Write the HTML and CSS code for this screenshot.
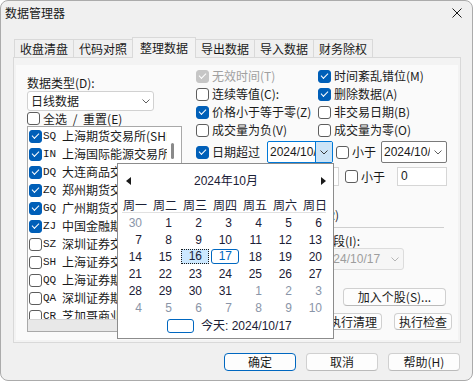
FILE: index.html
```html
<!DOCTYPE html>
<html lang="zh-CN">
<head>
    <meta charset="UTF-8">
    <title>数据管理器</title>
    <link rel="stylesheet" href="styles.css">
</head>
<body>
<div class="window">
    <div class="titlebar">
        <span class="title">数据管理器</span>
        <svg class="close" width="10" height="10" viewBox="0 0 10 10"><path d="M0.5 0.5L9.5 9.5M9.5 0.5L0.5 9.5" stroke="#1a1a1a" stroke-width="1" fill="none"/></svg>
    </div>

    <div class="tabs">
        <div class="tab">收盘清盘</div>
        <div class="tab">代码对照</div>
        <div class="tab active">整理数据</div>
        <div class="tab">导出数据</div>
        <div class="tab">导入数据</div>
        <div class="tab">财务除权</div>
    </div>

    <div class="panel">
        <div class="page">
            <div class="left">
                <div class="label">数据类型(D):</div>
                <div class="combo">
                    <span>日线数据</span>
                    <svg width="8" height="5" viewBox="0 0 8 5"><path d="M0.5 0.5L4 4L7.5 0.5" stroke="#5f5f5f" fill="none"/></svg>
                </div>
                <div class="check check-all"><span class="cb"></span>全选 / 重置(E)</div>
                <div class="list">
                    <div class="list-body">
                        <div class="items">
                            <div class="item"><span class="cb on"></span><span class="code">SQ</span>上海期货交易所(SHFE)</div>
                            <div class="item"><span class="cb on"></span><span class="code">IN</span>上海国际能源交易所(INE)</div>
                            <div class="item"><span class="cb on"></span><span class="code">DQ</span>大连商品交易所(DCE)</div>
                            <div class="item"><span class="cb on"></span><span class="code">ZQ</span>郑州期货交易所(ZCE)</div>
                            <div class="item"><span class="cb on"></span><span class="code">GQ</span>广州期货交易所(GFEX)</div>
                            <div class="item"><span class="cb on"></span><span class="code">ZJ</span>中国金融期货交易所</div>
                            <div class="item"><span class="cb"></span><span class="code">SZ</span>深圳证券交易所</div>
                            <div class="item"><span class="cb"></span><span class="code">SH</span>上海证券交易所</div>
                            <div class="item"><span class="cb"></span><span class="code">QQ</span>上海证券期权</div>
                            <div class="item"><span class="cb"></span><span class="code">QA</span>深圳证券期权</div>
                            <div class="item"><span class="cb"></span><span class="code">CR</span>芝加哥商业交易所</div>
                        </div>
                        <div class="vscroll"><div class="thumb"></div></div>
                    </div>
                    <div class="hscroll"></div>
                </div>
            </div>

            <div class="right">
                <div class="opts">
                    <div class="check disabled"><span class="cb on"></span>无效时间(T)</div>
                    <div class="check"><span class="cb on"></span>时间紊乱错位(M)</div>
                    <div class="check"><span class="cb"></span>连续等值(C):</div>
                    <div class="check"><span class="cb on"></span>删除数据(A)</div>
                    <div class="check"><span class="cb on"></span>价格小于等于零(Z)</div>
                    <div class="check"><span class="cb"></span>非交易日期(B)</div>
                    <div class="check"><span class="cb"></span>成交量为负(V)</div>
                    <div class="check"><span class="cb"></span>成交量为零(O)</div>
                </div>

                <div class="row date-row">
                    <div class="check lead"><span class="cb on"></span>日期超过</div>
                    <div class="picker focused">
                        <span class="val">2024/10/17</span>
                        <span class="drop"><svg width="8" height="5" viewBox="0 0 8 5"><path d="M0.5 0.5L4 4L7.5 0.5" stroke="#3a3a3a" fill="none"/></svg></span>
                    </div>
                    <div class="check less"><span class="cb"></span>小于</div>
                    <div class="picker second">
                        <span class="val">2024/10/17</span>
                        <span class="drop"><svg width="8" height="5" viewBox="0 0 8 5"><path d="M0.5 0.5L4 4L7.5 0.5" stroke="#5f5f5f" fill="none"/></svg></span>
                    </div>
                </div>

                <div class="row num-row">
                    <div class="lead">成交量超过</div>
                    <div class="edit wide"></div>
                    <div class="check less-num"><span class="cb"></span>小于</div>
                    <div class="edit small">0</div>
                </div>

                <div class="section"><span>数据检查范围(R)</span></div>

                <div class="period"><span class="pre">检查时间</span>段(I):</div>
                <div class="combo disabled-combo">
                    <span>2024/10/17</span>
                    <svg width="8" height="5" viewBox="0 0 8 5"><path d="M0.5 0.5L4 4L7.5 0.5" stroke="#b5b5b5" fill="none"/></svg>
                </div>

                <button class="btn add">加入个股(S)...</button>
                <div class="row actions">
                    <button class="btn">执行清理</button>
                    <button class="btn">执行检查</button>
                </div>
            </div>
        </div>
    </div>

    <div class="footer">
        <button class="btn default">确定</button>
        <button class="btn">取消</button>
        <button class="btn">帮助(H)</button>
    </div>

    <div class="calendar">
        <div class="cal-head">
            <svg width="5" height="8" viewBox="0 0 5 8"><path d="M5 0L0 4L5 8Z" fill="#1a1a1a"/></svg>
            <span>2024年10月</span>
            <svg width="5" height="8" viewBox="0 0 5 8"><path d="M0 0L5 4L0 8Z" fill="#1a1a1a"/></svg>
        </div>
        <div class="cal-week">
            <span>周一</span><span>周二</span><span>周三</span><span>周四</span><span>周五</span><span>周六</span><span>周日</span>
        </div>
        <div class="cal-sep"></div>
        <div class="cal-days">
            <span class="other">30</span><span>1</span><span>2</span><span>3</span><span>4</span><span>5</span><span>6</span>
            <span>7</span><span>8</span><span>9</span><span>10</span><span>11</span><span>12</span><span>13</span>
            <span>14</span><span>15</span><span class="sel">16</span><span class="today">17</span><span>18</span><span>19</span><span>20</span>
            <span>21</span><span>22</span><span>23</span><span>24</span><span>25</span><span>26</span><span>27</span>
            <span>28</span><span>29</span><span>30</span><span>31</span><span class="other">1</span><span class="other">2</span><span class="other">3</span>
            <span class="other">4</span><span class="other">5</span><span class="other">6</span><span class="other">7</span><span class="other">8</span><span class="other">9</span><span class="other">10</span>
        </div>
        <div class="cal-foot">
            <span class="today-box"></span>
            <span>今天: 2024/10/17</span>
        </div>
    </div>
</div>
</body>
</html>
```

FILE: styles.css
```css
body {
    margin: 0;
    background: #fff;
    font-family: "Noto Sans CJK SC", "Noto Sans", sans-serif;
    font-size: 12px;
    line-height: 16px;
    color: #1a1a1a;
}
.window {
    position: relative;
    width: 473px;
    height: 381px;
    box-sizing: border-box;
    border: 1px solid #ababab;
    border-radius: 8px;
    background: #f0f0f0;
    overflow: hidden;
}
.titlebar {
    display: flex;
    align-items: center;
    justify-content: space-between;
    height: 24px;
    padding: 0 10px 0 4px;
}
.close {
    display: block;
}

/* tabs */
.tabs {
    display: flex;
    align-items: flex-end;
    height: 20px;
    margin: 12px 0 0 13px;
}
.tab {
    height: 18px;
    box-sizing: border-box;
    padding: 0 5px;
    border: 1px solid #d9d9d9;
    border-bottom: none;
    line-height: 17px;
    white-space: nowrap;
}
.tab + .tab {
    margin-left: -1px;
}
.tab.active {
    position: relative;
    z-index: 1;
    height: 21px;
    margin-bottom: -1px;
    padding: 1px 7px 0;
    background: #f3f3f3;
}
.panel {
    width: 448px;
    height: 286px;
    box-sizing: border-box;
    margin-left: 12px;
    padding: 7px 2px 2px;
    border: 1px solid #d9d9d9;
    background: #f3f3f3;
}
.page {
    display: flex;
    height: 275px;
    background: #fafafa;
}

/* checkboxes */
.check {
    display: flex;
    align-items: center;
    gap: 3px;
    white-space: nowrap;
}
.cb {
    display: block;
    flex-shrink: 0;
    width: 13px;
    height: 13px;
    box-sizing: border-box;
    border: 1px solid #5d5d5d;
    border-radius: 3px;
    background: #fff;
}
.cb.on {
    background: #005fb8;
    border-color: #005fb8;
}
.cb.on::after {
    content: "";
    display: block;
    width: 6px;
    height: 3px;
    margin: 2.5px 0 0 2px;
    border-left: 1.5px solid #fff;
    border-bottom: 1.5px solid #fff;
    transform: rotate(-45deg);
}
.check.disabled {
    color: #a0a0a0;
}
.check.disabled .cb {
    background: #c6c6c6;
    border-color: #c6c6c6;
}

/* left column */
.left {
    width: 155px;
    margin: 10px 0 0 11px;
}
.combo {
    display: flex;
    align-items: center;
    justify-content: space-between;
    height: 20px;
    box-sizing: border-box;
    padding: 0 3px;
    border: 1px solid #d1d1d1;
    border-radius: 3px;
    background: #fff;
    width: 127px;
}
.check-all {
    height: 15px;
    word-spacing: 3px;
}
.list {
    height: 206px;
    box-sizing: border-box;
    border: 1px solid #a9a9a9;
    background: #fff;
}
.list-body {
    display: flex;
    height: 192px;
}
.items {
    flex: 1;
    overflow: hidden;
}
.item {
    display: flex;
    align-items: center;
    height: 18px;
    padding-left: 1px;
    white-space: nowrap;
}
.code {
    flex-shrink: 0;
    width: 19px;
    margin-left: 1px;
    font-family: "Liberation Mono", monospace;
    font-size: 11px;
}
.vscroll {
    width: 14px;
}
.thumb {
    width: 3px;
    height: 16px;
    margin: 16px 0 0 4px;
    border-radius: 2px;
    background: #8a8a8a;
}
.hscroll {
    height: 11px;
    border-top: 1px solid #d4d4d4;
    background: #e8e8e8;
}

/* right column */
.right {
    flex: 1;
    margin-left: 14px;
    padding-top: 2px;
}
.opts {
    display: grid;
    grid-template-columns: 122px 1fr;
    grid-auto-rows: 18px;
}
.row {
    display: flex;
    align-items: center;
}
.date-row {
    height: 22px;
    margin-top: 2px;
}
.lead {
    width: 71px;
    flex-shrink: 0;
    white-space: nowrap;
}
.picker {
    display: flex;
    width: 66px;
    height: 22px;
    box-sizing: border-box;
    border: 1px solid #7a7a7a;
    border-radius: 2px;
    background: #fff;
}
.picker .val {
    flex: 1;
    overflow: hidden;
    padding-left: 2px;
    white-space: nowrap;
    font-family: "Liberation Sans", sans-serif;
    line-height: 20px;
}
.picker .drop {
    display: flex;
    align-items: center;
    justify-content: center;
    width: 16px;
}
.picker.focused {
    border-color: #0078d7;
}
.picker.focused .drop {
    border-left: 1px solid #0078d7;
    background: #cce4f7;
}
.less {
    width: 40px;
    margin-left: 3px;
}
.picker.second {
    margin-left: 5px;
}
.num-row {
    height: 19px;
    margin-top: 4px;
}
.edit {
    height: 19px;
    box-sizing: border-box;
    padding-left: 3px;
    border: 1px solid #d6d6d6;
    background: #fff;
    font-family: "Liberation Sans", sans-serif;
    line-height: 17px;
}
.edit.wide {
    width: 72px;
}
.less-num {
    margin-left: 6px;
}
.edit.small {
    width: 50px;
    margin-left: 12px;
}
.section {
    width: 248px;
    height: 20px;
    margin-top: 21px;
    border-bottom: 1px solid #cfcfcf;
}
.section span {
    display: inline-block;
    width: 143px;
    text-align: right;
    white-space: nowrap;
}
.period {
    margin-top: 6px;
    line-height: 14px;
    white-space: nowrap;
}
.period .pre {
    display: inline-block;
    width: 137px;
    text-align: right;
}
.disabled-combo {
    width: 88px;
    height: 22px;
    margin-left: 120px;
    padding: 0 4px 0 3px;
    border-color: #dcdcdc;
    background: #f6f6f6;
    color: #9d9d9d;
    font-family: "Liberation Sans", sans-serif;
}

/* buttons */
.btn {
    display: block;
    height: 18px;
    box-sizing: border-box;
    padding: 0;
    border: 1px solid #d0d0d0;
    border-bottom-color: #bababa;
    border-radius: 4px;
    background: #fdfdfd;
    color: #1a1a1a;
    font-family: inherit;
    font-size: 12px;
    line-height: 16px;
    text-align: center;
    white-space: nowrap;
}
.btn.add {
    width: 103px;
    margin: 18px 0 0 147px;
}
.actions {
    margin: 7px 0 0 128px;
    gap: 12px;
}
.actions .btn {
    width: 58px;
    height: 17px;
    line-height: 15px;
}
.footer {
    display: flex;
    justify-content: flex-end;
    gap: 10px;
    margin-top: 10px;
    padding-right: 12px;
}
.footer .btn {
    width: 72px;
}
.btn.default {
    border-color: #0067c0;
}

/* calendar dropdown */
.calendar {
    position: absolute;
    left: 116px;
    top: 162px;
    width: 217px;
    height: 176px;
    box-sizing: border-box;
    border: 1px solid #8c8c8c;
    background: #fff;
    color: #1b2036;
    font-family: "Liberation Sans", "Noto Sans CJK SC", sans-serif;
}
.cal-head {
    display: flex;
    align-items: center;
    justify-content: space-between;
    height: 16px;
    margin-top: 9px;
    padding: 0 7px 0 8px;
}
.cal-week,
.cal-days {
    display: grid;
    grid-template-columns: repeat(7, 30px);
    padding-left: 2px;
}
.cal-week {
    margin-top: 8px;
    line-height: 15px;
    text-align: center;
    font-family: "Noto Sans CJK SC", sans-serif;
}
.cal-sep {
    width: 204px;
    height: 1px;
    margin-left: 4px;
    background: #e1e1e1;
}
.cal-days {
    margin-top: 1.5px;
    grid-auto-rows: 17.2px;
    line-height: 17.2px;
    text-align: right;
}
.cal-days span {
    padding-right: 8px;
}
.cal-days .other {
    color: #8a95a8;
}
.cal-days .sel,
.cal-days .today {
    height: 15px;
    box-sizing: border-box;
    margin: 0 1px;
    padding-right: 6px;
    line-height: 13px;
}
.cal-days .sel {
    border: 1px dotted #1a1a1a;
    background: #cce8ff;
}
.cal-days .today {
    border: 1px solid #0067c0;
    border-radius: 3px;
    color: #0067c0;
}
.cal-foot {
    display: flex;
    align-items: center;
    gap: 7px;
    height: 15px;
    margin-top: 1px;
    padding-left: 49px;
}
.today-box {
    width: 27px;
    height: 14px;
    box-sizing: border-box;
    border: 1px solid #0067c0;
    border-radius: 3px;
}
```
